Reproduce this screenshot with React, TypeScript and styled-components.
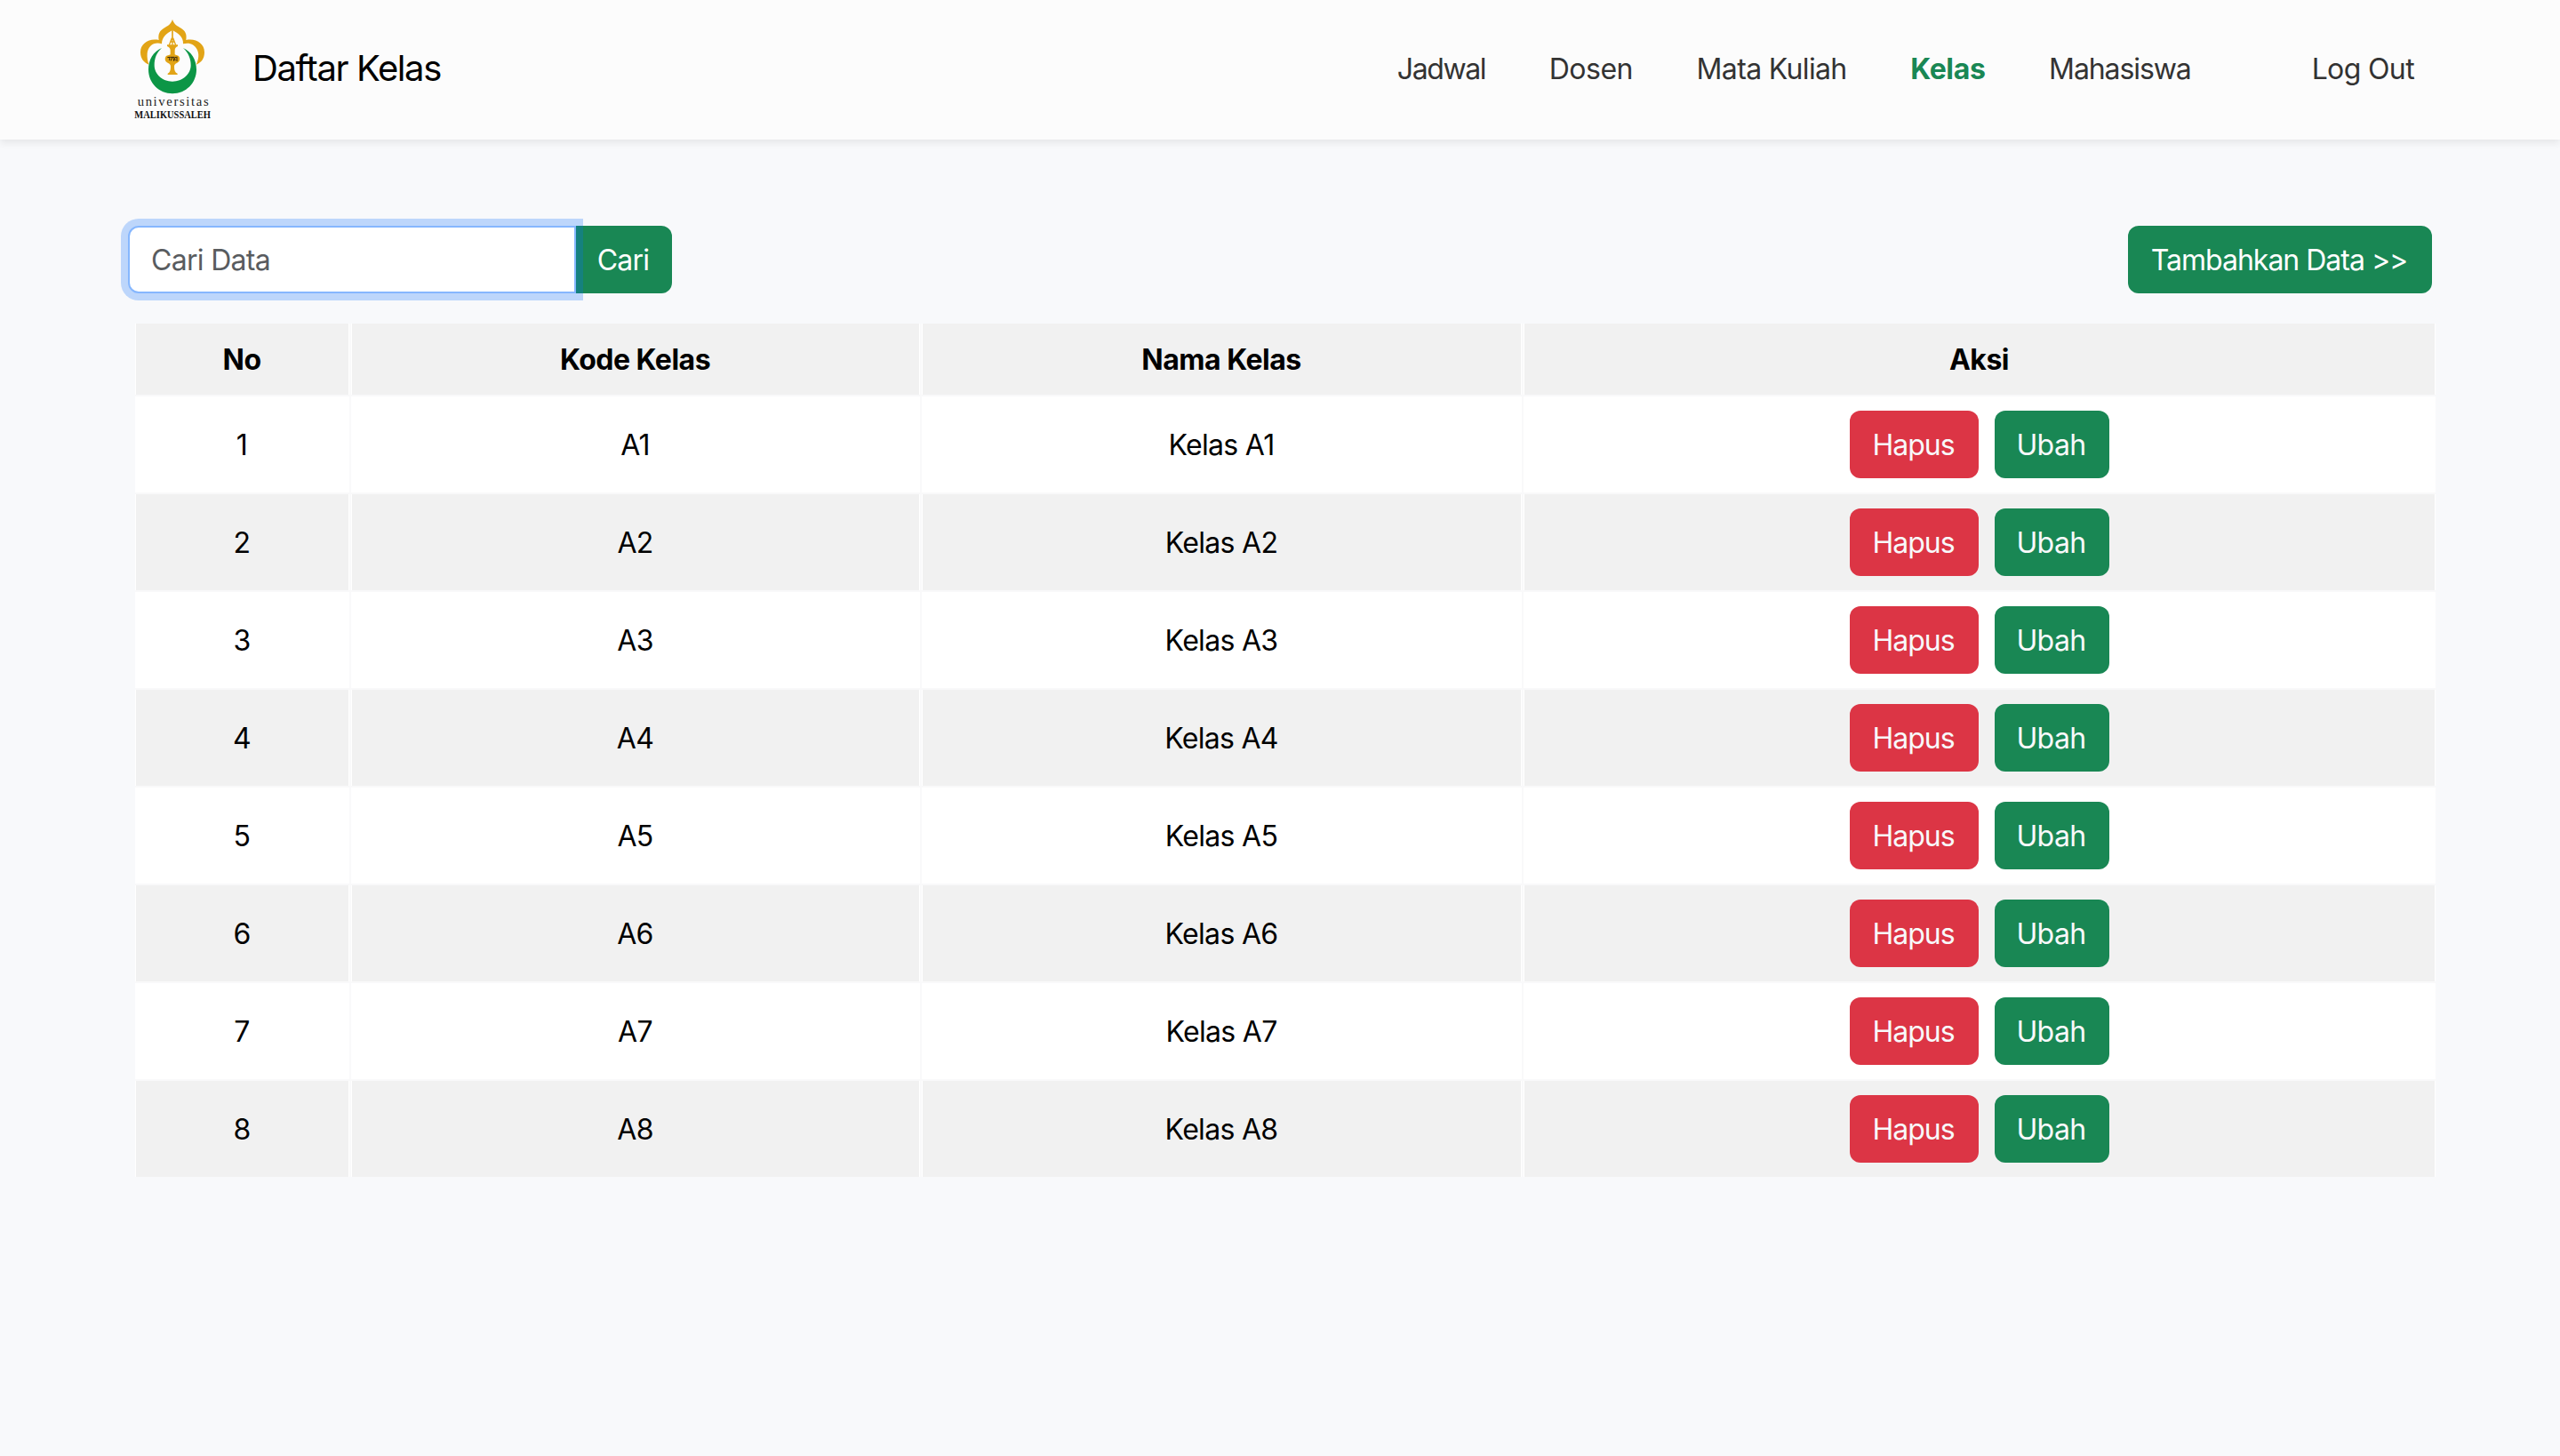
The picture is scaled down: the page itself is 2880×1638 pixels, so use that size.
import React from 'react';
import styled, { createGlobalStyle } from 'styled-components';

const Global = createGlobalStyle`
  *, *::before, *::after { box-sizing: border-box; }
  body { margin: 0; background: #f8f9fb; font: 400 32px/1.5 Inter, "Liberation Sans", sans-serif; color: #000; }
`;

const Header = styled.header`
  height: 157px;
  background: #fcfcfc;
  box-shadow: 0 4px 8px rgba(0, 0, 0, 0.075);
  display: flex;
  align-items: flex-start;
  padding: 20px 144px 0 148px;
`;

const Brand = styled.div`
  display: flex;
  align-items: flex-start;
  gap: 42px;
`;

const LogoSvg = styled.svg`
  width: 94px;
  height: 122px;
  display: block;
  overflow: visible;
`;

const PageTitle = styled.h1`
  margin: 27px 0 0;
  font-size: 40px;
  font-weight: 400;
  line-height: 60px;
  letter-spacing: -1.4px;
  white-space: nowrap;
`;

const Nav = styled.nav`
  margin: 34px 20px 0 auto;
  display: flex;
  line-height: 48px;
`;

const NavLink = styled.a<{ $active?: boolean; $gap?: number; $tracking: number }>`
  color: ${(p) => (p.$active ? '#198754' : '#333')};
  font-weight: ${(p) => (p.$active ? 700 : 400)};
  margin-right: ${(p) => p.$gap ?? 71.6}px;
  letter-spacing: ${(p) => p.$tracking}px;
  white-space: nowrap;
`;

const Main = styled.main`
  padding: 97px 140px 0 144px;
`;

const Toolbar = styled.div`
  display: flex;
  justify-content: space-between;
  padding-right: 4px;
  margin-bottom: 34px;
`;

const SearchGroup = styled.form`
  display: flex;
`;

const SearchInput = styled.input`
  width: 504px;
  height: 76px;
  padding: 12px 24px;
  border: 2px solid #86b7fe;
  border-radius: 12px 0 0 12px;
  background: #fff;
  box-shadow: 0 0 0 8px rgba(13, 110, 253, 0.25);
  position: relative;
  z-index: 1;
  font: inherit;
  letter-spacing: -0.7px;
  outline: none;
  &::placeholder { color: #595c5f; opacity: 1; }
`;

const Button = styled.button<{
  $kind?: 'danger';
  $joined?: boolean;
  $soft?: boolean;
  $width: number;
  $tracking: number;
}>`
  width: ${(p) => p.$width}px;
  height: 76px;
  padding: 2px 2px 0 0;
  border: 0;
  border-radius: ${(p) => (p.$joined ? '0 12px 12px 0' : '12px')};
  background: ${(p) => (p.$kind === 'danger' ? '#dc3545' : '#198754')};
  color: ${(p) => (p.$soft ? '#f8f9fa' : '#fff')};
  font: inherit;
  letter-spacing: ${(p) => p.$tracking}px;
  text-align: center;
  white-space: nowrap;
`;

const Table = styled.div`
  margin-left: 8px;
  display: flex;
  flex-direction: column;
  gap: 2px;
  background: #f9f9fa;
`;

const Row = styled.div<{ $shaded?: boolean; $head?: boolean }>`
  display: grid;
  grid-template-columns: 241px 640px 675px 1fr;
  gap: 2px;
  height: ${(p) => (p.$head ? 80 : 108)}px;
  font-weight: ${(p) => (p.$head ? 700 : 400)};
  letter-spacing: ${(p) => (p.$head ? -0.5 : -0.7)}px;
  --cell: ${(p) => (p.$shaded || p.$head ? '#f1f1f1' : '#fff')};
`;

const Cell = styled.div<{ $actions?: boolean }>`
  display: flex;
  align-items: center;
  justify-content: center;
  gap: 18px;
  padding: ${(p) => (p.$actions ? '0' : '2px 1px 0 0')};
  background: var(--cell);
  border: solid #fff;
  border-width: 0 1px;
`;

function Logo() {
  return (
    <LogoSvg viewBox="54 30 282 366" aria-label="Universitas Malikussaleh">
      <path
        fill="#e2a416"
        d="M192 35C197 52 208 57 221 65C236 74 241 86 238 105C270 98 300 116 300 146C300 168 289 181 272 188C281 170 283 151 274 135C266 121 251 112 228 118C230 93 209 82 192 71C175 82 156 93 156 118C130 110 109 125 107 151C106 164 108 177 113 188C95 181 84 166 84 146C84 116 114 98 146 105C143 86 148 74 163 65C176 57 187 52 192 35Z"
      />
      <path
        fill="#0c9646"
        d="M156 132C127 144 111 172 111 205C111 251 147 286 192 286C238 286 273 250 273 205C273 172 256 144 228 132C246 148 254 168 254 190C254 221 226 245 192 245C158 245 131 221 131 190C131 166 139 147 156 132Z"
      />
      <path d="M192 70V101" stroke="#e2a416" strokeWidth="5" fill="none" />
      <path d="M190 98L181 122M194 98L203 122M192 98V122M185 111H199" stroke="#e2a416" strokeWidth="4" fill="none" />
      <path
        fill="#e2a416"
        d="M174 121H210V126C204 129 200 133 200 140V154C203 157 212 156 215 162C219 170 216 178 208 182C201 185 198 188 198 195C198 208 201 215 209 218V222H176V218C183 215 186 208 186 195C186 188 183 185 176 182C168 178 165 170 169 162C172 156 182 157 185 154V140C185 133 180 129 174 126Z"
      />
      <path
        d="M175 164l8-1-1 11M184 163h8l-5 12M192 163h6l-2 13M200 163l6 1M207 161v16M200 166l1 9"
        stroke="#33240a"
        strokeWidth="3"
        fill="none"
      />
      <text x="74" y="326" textLength="240" fontFamily="Liberation Serif, serif" fontSize="44" fill="#1c1c1c">
        universitas
      </text>
      <text
        x="64"
        y="368"
        textLength="257"
        lengthAdjust="spacingAndGlyphs"
        fontFamily="Liberation Serif, serif"
        fontWeight="700"
        fontSize="38"
        fill="#111"
      >
        MALIKUSSALEH
      </text>
    </LogoSvg>
  );
}

const classes = ['A1', 'A2', 'A3', 'A4', 'A5', 'A6', 'A7', 'A8'];

export default function App() {
  return (
    <>
      <Global />
      <Header>
        <Brand>
          <Logo />
          <PageTitle>Daftar Kelas</PageTitle>
        </Brand>
        <Nav>
          <NavLink $tracking={-1.4}>Jadwal</NavLink>
          <NavLink $tracking={-0.5}>Dosen</NavLink>
          <NavLink $tracking={-0.65}>Mata Kuliah</NavLink>
          <NavLink $tracking={-0.35} $active>Kelas</NavLink>
          <NavLink $tracking={-1.1} $gap={136}>Mahasiswa</NavLink>
          <NavLink $tracking={-0.63} $gap={0}>Log Out</NavLink>
        </Nav>
      </Header>
      <Main>
        <Toolbar>
          <SearchGroup>
            <SearchInput placeholder="Cari Data" />
            <Button type="button" $joined $width={108} $tracking={-0.8}>Cari</Button>
          </SearchGroup>
          <Button $width={342} $tracking={-1}>Tambahkan Data &gt;&gt;</Button>
        </Toolbar>
        <Table>
          <Row $head>
            <Cell>No</Cell>
            <Cell>Kode Kelas</Cell>
            <Cell>Nama Kelas</Cell>
            <Cell>Aksi</Cell>
          </Row>
          {classes.map((name, i) => (
            <Row key={name} $shaded={i % 2 === 1}>
              <Cell>{i + 1}</Cell>
              <Cell>{name}</Cell>
              <Cell>Kelas {name}</Cell>
              <Cell $actions>
                <Button $kind="danger" $soft $width={145} $tracking={-1}>Hapus</Button>
                <Button $soft $width={129} $tracking={-0.6}>Ubah</Button>
              </Cell>
            </Row>
          ))}
        </Table>
      </Main>
    </>
  );
}
